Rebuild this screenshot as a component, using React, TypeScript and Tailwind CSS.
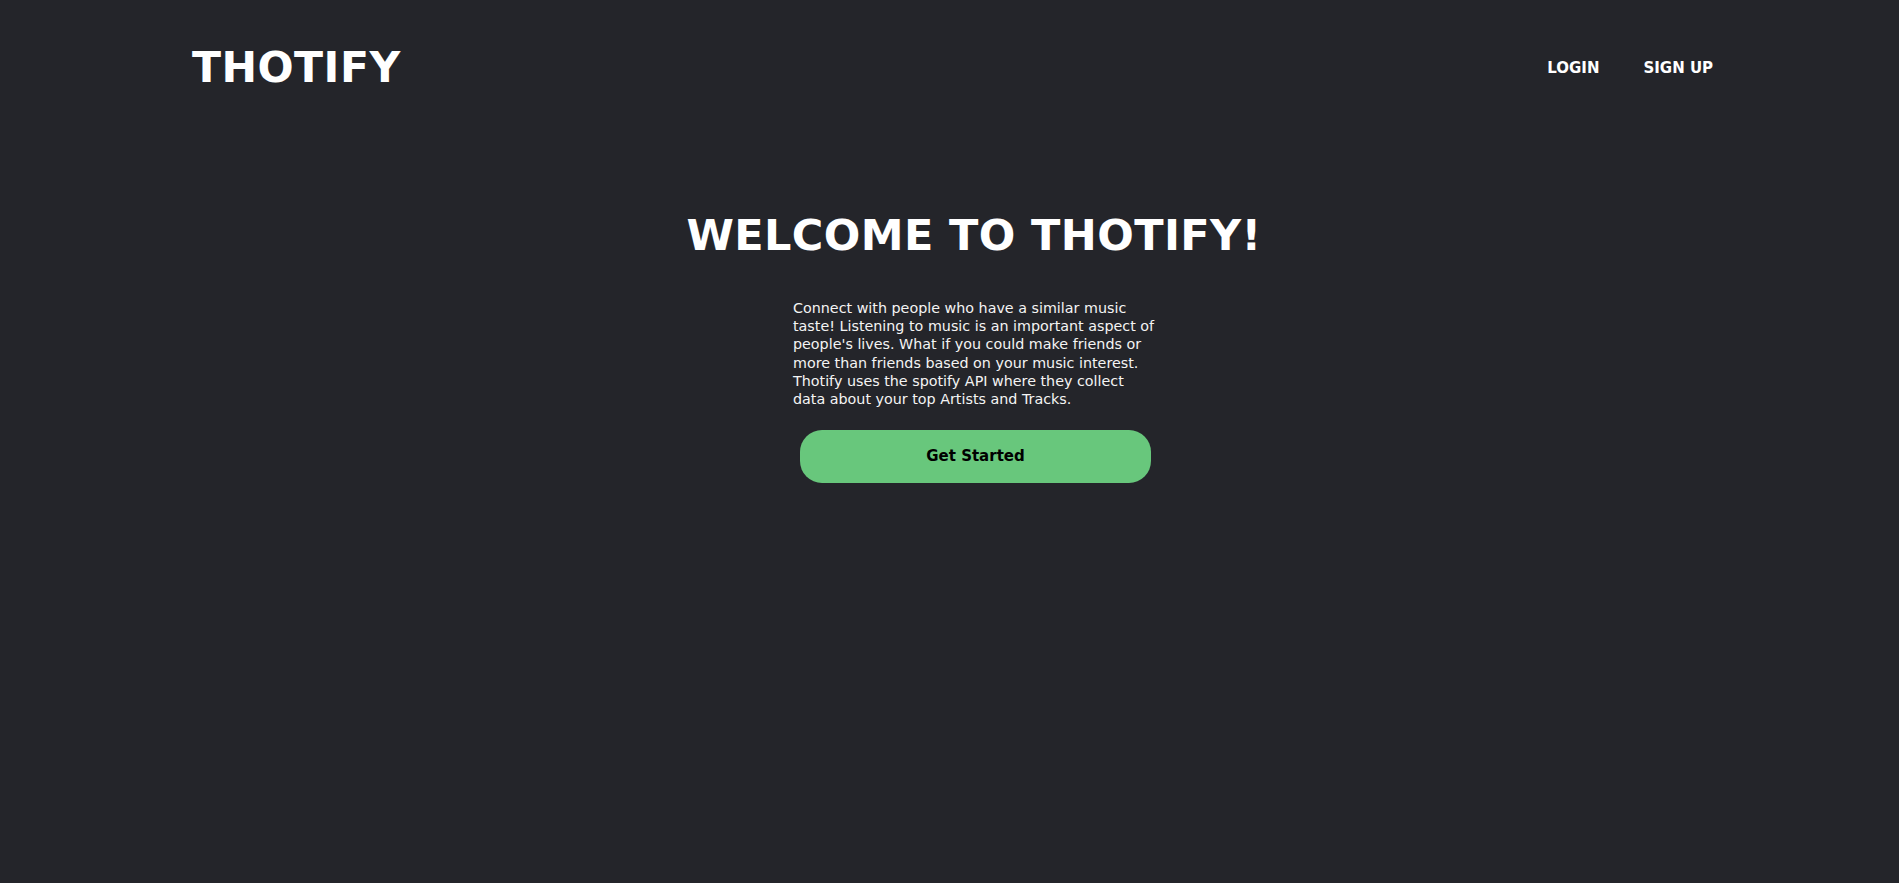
import React from "react";

export default function App() {
  const lines = [
    "Connect with people who have a similar music",
    "taste! Listening to music is an important aspect of",
    "people's lives. What if you could make friends or",
    "more than friends based on your music interest.",
    "Thotify uses the spotify API where they collect",
    "data about your top Artists and Tracks.",
  ];
  return (
    <div
      className="min-h-[883px] w-full bg-[#24252a] text-white"
      style={{ fontFamily: '"DejaVu Sans", "Liberation Sans", sans-serif' }}
    >
      <header className="flex items-center justify-between px-[10%] pt-[34px]">
        <div className="ml-[2px] text-[42.5px] font-bold leading-[68px] tracking-[0.5px]">THOTIFY</div>
        <nav className="-mr-[4px] flex items-center gap-[44px] text-[15px] font-bold">
          <a>LOGIN</a>
          <a>SIGN UP</a>
        </nav>
      </header>
      <main className="flex flex-col items-center pl-[49px] pt-[108px]">
        <h1 className="text-center text-[43px] font-bold leading-[50px] tracking-[0.4px]">
          WELCOME TO THOTIFY!
        </h1>
        <div className="mt-[39px] w-[362px]">
          <p className="whitespace-nowrap text-[14.3px] leading-[18.2px] text-[#f4f4f4]">
            {lines.map((l, i) => (
              <span key={i} className="block">
                {l}
              </span>
            ))}
          </p>
          <div className="mt-[22px] flex justify-center pl-[3px]">
            <button className="h-[53px] w-[351px] rounded-[22px] bg-[#68c77c] text-[15px] font-bold text-black">
              Get Started
            </button>
          </div>
        </div>
      </main>
    </div>
  );
}
